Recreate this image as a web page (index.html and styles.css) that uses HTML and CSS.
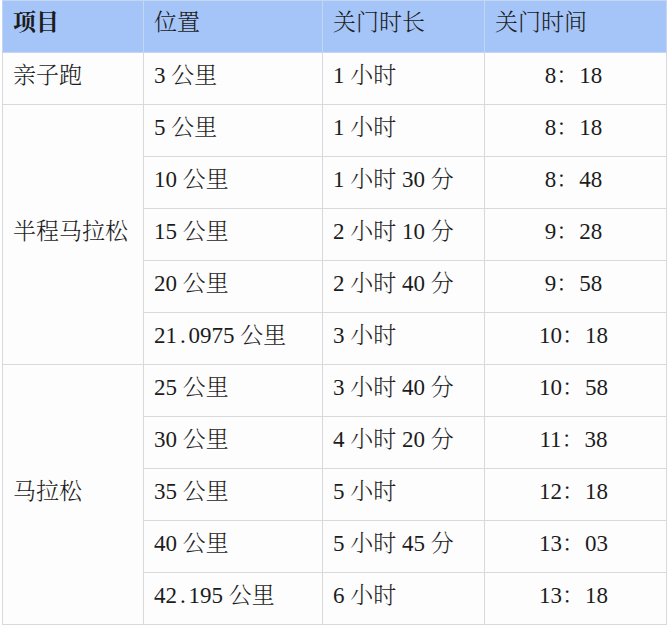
FILE: index.html
```html
<!DOCTYPE html>
<html lang="zh-CN">
<head>
<meta charset="utf-8">
<title>关门时间</title>
<link rel="stylesheet" href="styles.css">
</head>
<body>
<table class="cutoff">
  <colgroup>
    <col class="c1"><col class="c2"><col class="c3"><col class="c4">
  </colgroup>
  <thead>
    <tr>
      <th class="strong">项目</th>
      <th>位置</th>
      <th>关门时长</th>
      <th>关门时间</th>
    </tr>
  </thead>
  <tbody>
    <tr><td>亲子跑</td><td>3 公里</td><td>1 小时</td><td class="time">8：18</td></tr>
    <tr><td rowspan="5">半程马拉松</td><td>5 公里</td><td>1 小时</td><td class="time">8：18</td></tr>
    <tr><td>10 公里</td><td>1 小时 30 分</td><td class="time">8：48</td></tr>
    <tr><td>15 公里</td><td>2 小时 10 分</td><td class="time">9：28</td></tr>
    <tr><td>20 公里</td><td>2 小时 40 分</td><td class="time">9：58</td></tr>
    <tr><td>21<span class="pt">.</span>0975 公里</td><td>3 小时</td><td class="time">10：18</td></tr>
    <tr><td rowspan="5">马拉松</td><td>25 公里</td><td>3 小时 40 分</td><td class="time">10：58</td></tr>
    <tr><td>30 公里</td><td>4 小时 20 分</td><td class="time">11：38</td></tr>
    <tr><td>35 公里</td><td>5 小时</td><td class="time">12：18</td></tr>
    <tr><td>40 公里</td><td>5 小时 45 分</td><td class="time">13：03</td></tr>
    <tr><td>42<span class="pt">.</span>195 公里</td><td>6 小时</td><td class="time">13：18</td></tr>
  </tbody>
</table>
</body>
</html>
```
FILE: styles.css
```css
html, body {
  margin: 0;
  padding: 0;
  background: #ffffff;
}

body {
  font-family: "Liberation Serif", "Noto Serif CJK SC", "Noto Sans CJK SC", serif;
  font-size: 23px;
  font-weight: 300;
  color: #1c1c1c;
}

.cutoff {
  margin-left: 2px;
  border-collapse: collapse;
  table-layout: fixed;
  width: 665px;
  background: #fdfdfe;
}

.c1 { width: 141px; }
.c2 { width: 179px; }
.c3 { width: 162px; }
.c4 { width: 182px; }

.cutoff th,
.cutoff td {
  border: 1px solid #d9d9dc;
  height: 45px;
  padding: 0 0 6px 10px;
  text-align: left;
  vertical-align: middle;
  white-space: nowrap;
  line-height: 1;
}

.cutoff thead th {
  background: #a5c5f8;
  font-weight: 300;
  height: 43px;
  padding-bottom: 8px;
  border-color: #c4d6f2;
}

.cutoff thead th.strong {
  font-weight: 700;
}

.cutoff td.time {
  text-align: center;
  padding-left: 0;
  padding-right: 4px;
}

.pt {
  display: inline-block;
  width: 0.5em;
  text-align: center;
}
```
